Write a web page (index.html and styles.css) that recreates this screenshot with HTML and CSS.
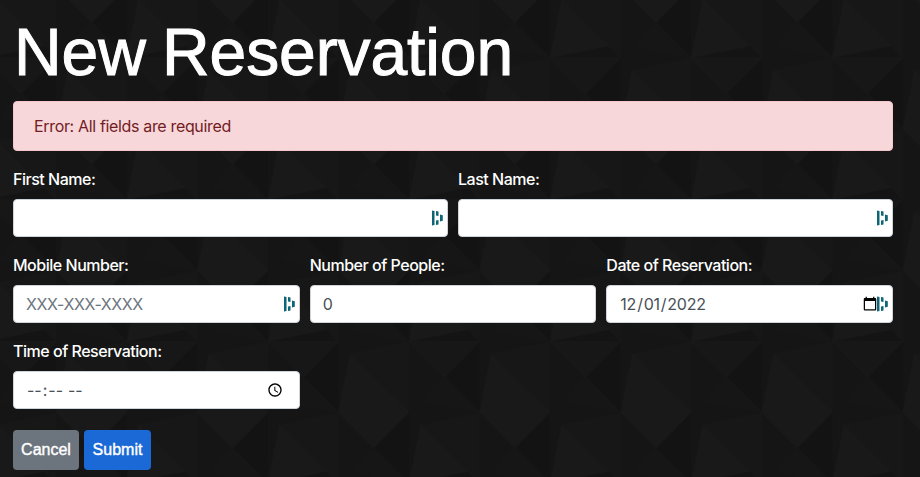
FILE: index.html
```html
<!DOCTYPE html>
<html lang="en-US">
<head>
<meta charset="utf-8">
<title>New Reservation</title>
<link rel="stylesheet" href="styles.css">
</head>
<body>
<svg class="backdrop" aria-hidden="true">
  <defs>
    <g id="facets">
      <path fill="#171717" d="M-59 12 0 0V70.5Z"/>
      <path fill="#191919" d="M-59 12 0 70.5-35 106-70.5 70.5Z"/>
      <path fill="#131313" d="M-35 106 0 70.5V141Z"/>
      <path fill="#161616" d="M-35 106 0 141-56 130-46 116Z"/>
    </g>
    <g id="banded">
      <use href="#facets"/>
      <path fill="#141414" d="M-70.5 70.5-11.5 58.5 0 70.5Z"/>
      <path fill="#171717" d="M-70.5 70.5 0 70.5-35 106Z"/>
    </g>
    <pattern id="tiles" width="141.1" height="141.8" patternUnits="userSpaceOnUse" patternTransform="translate(691.2 58.4)">
      <rect width="142" height="142" fill="#151515"/>
      <use href="#facets" x="0" y="-141.8"/>
      <use href="#facets" x="141.1" y="-141.8"/>
      <use href="#banded" x="70.55" y="-70.9"/>
      <use href="#banded" x="211.65" y="-70.9"/>
      <use href="#facets" x="0" y="0"/>
      <use href="#facets" x="141.1" y="0"/>
      <use href="#banded" x="70.55" y="70.9"/>
      <use href="#banded" x="211.65" y="70.9"/>
    </pattern>
    <symbol id="vault" viewBox="0 0 12 16">
      <path fill="#0e6575" d="M0 .5 2.500 1v14L0 15.500ZM4 1l2.500.5V6L4 5.500ZM4 10.500 6.500 10v4.500L4 15ZM8 4.500l2.800.8v5.400L8 11.500Z"/>
    </symbol>
  </defs>
  <rect width="100%" height="100%" fill="url(#tiles)"/>
</svg>
<main class="page">
  <h1 class="title">New Reservation</h1>
  <div class="alert">Error: All fields are required</div>
  <form>
    <div class="row halves">
      <label class="field">First Name:<span class="control"><input type="text"><svg class="vault"><use href="#vault"/></svg></span></label>
      <label class="field">Last Name:<span class="control"><input type="text"><svg class="vault"><use href="#vault"/></svg></span></label>
    </div>
    <div class="row thirds">
      <label class="field">Mobile Number:<span class="control"><input class="phone" type="text" placeholder="XXX-XXX-XXXX"><svg class="vault"><use href="#vault"/></svg></span></label>
      <label class="field">Number of People:<span class="control"><input type="number" value="0"></span></label>
      <label class="field">Date of Reservation:<span class="control"><input class="date" type="date" value="2022-12-01"><svg class="vault"><use href="#vault"/></svg></span></label>
      <label class="field">Time of Reservation:<span class="control"><input class="time" type="time"></span></label>
    </div>
    <div class="actions">
      <button class="btn cancel" type="button">Cancel</button>
      <button class="btn submit" type="button">Submit</button>
    </div>
  </form>
</main>
</body>
</html>
```
FILE: styles.css
```css
* { box-sizing: border-box; }
html, body { height: 100%; }
body {
  margin: 0;
  overflow: hidden;
  background: #151515;
  color: #fff;
  font: 16px/24px Inter, "Liberation Sans", sans-serif;
}
.backdrop { position: absolute; inset: 0; width: 100%; height: 100%; z-index: -1; }
.page { padding: 12px 27px 0 13px; }
.title {
  margin: 0 0 9px;
  padding-left: 1px;
  height: 80px;
  font: 400 66px/80px "Liberation Sans", sans-serif;
  -webkit-text-stroke: 1px #fff;
  letter-spacing: -.1px;
  word-spacing: -2px;
  white-space: nowrap;
}
.alert {
  height: 50px;
  margin-bottom: 16px;
  padding: 12px 20px;
  border: 1px solid #f5c6cb;
  border-radius: 4px;
  background: #f8d7da;
  color: #721c24;
  letter-spacing: -.34px;
}
.row { display: grid; gap: 16px 10px; margin-bottom: 16px; }
.halves { grid-template-columns: 1fr 1fr; }
.thirds { grid-template-columns: repeat(3, 1fr); }
.field { display: flex; flex-direction: column; gap: 8px; font-weight: 500; letter-spacing: -.48px; }
.control { position: relative; display: block; height: 38px; }
input {
  display: block;
  width: 100%;
  height: 38px;
  margin: 0;
  padding: 6px 12px;
  border: 1px solid #ced4da;
  border-radius: 4px;
  background: #fff;
  color: #495057;
  font: 400 16px/24px Inter, sans-serif;
  letter-spacing: -.24px;
}
input::placeholder { color: #6c757d; opacity: 1; }
.phone { letter-spacing: -.4px; }
.vault { position: absolute; right: 4px; top: 11px; width: 12px; height: 16px; }
.actions { display: flex; gap: 5px; padding-top: 5px; }
.btn {
  height: 40px;
  margin: 0;
  padding: 0;
  border: 0;
  border-radius: 4px;
  color: #fff;
  font: 400 16px/24px "Liberation Sans", sans-serif;
  -webkit-text-stroke: .4px #fff;
}
.cancel { width: 66px; background: #6c757d; }
.submit { width: 67px; background: #1b69d6; }
```
